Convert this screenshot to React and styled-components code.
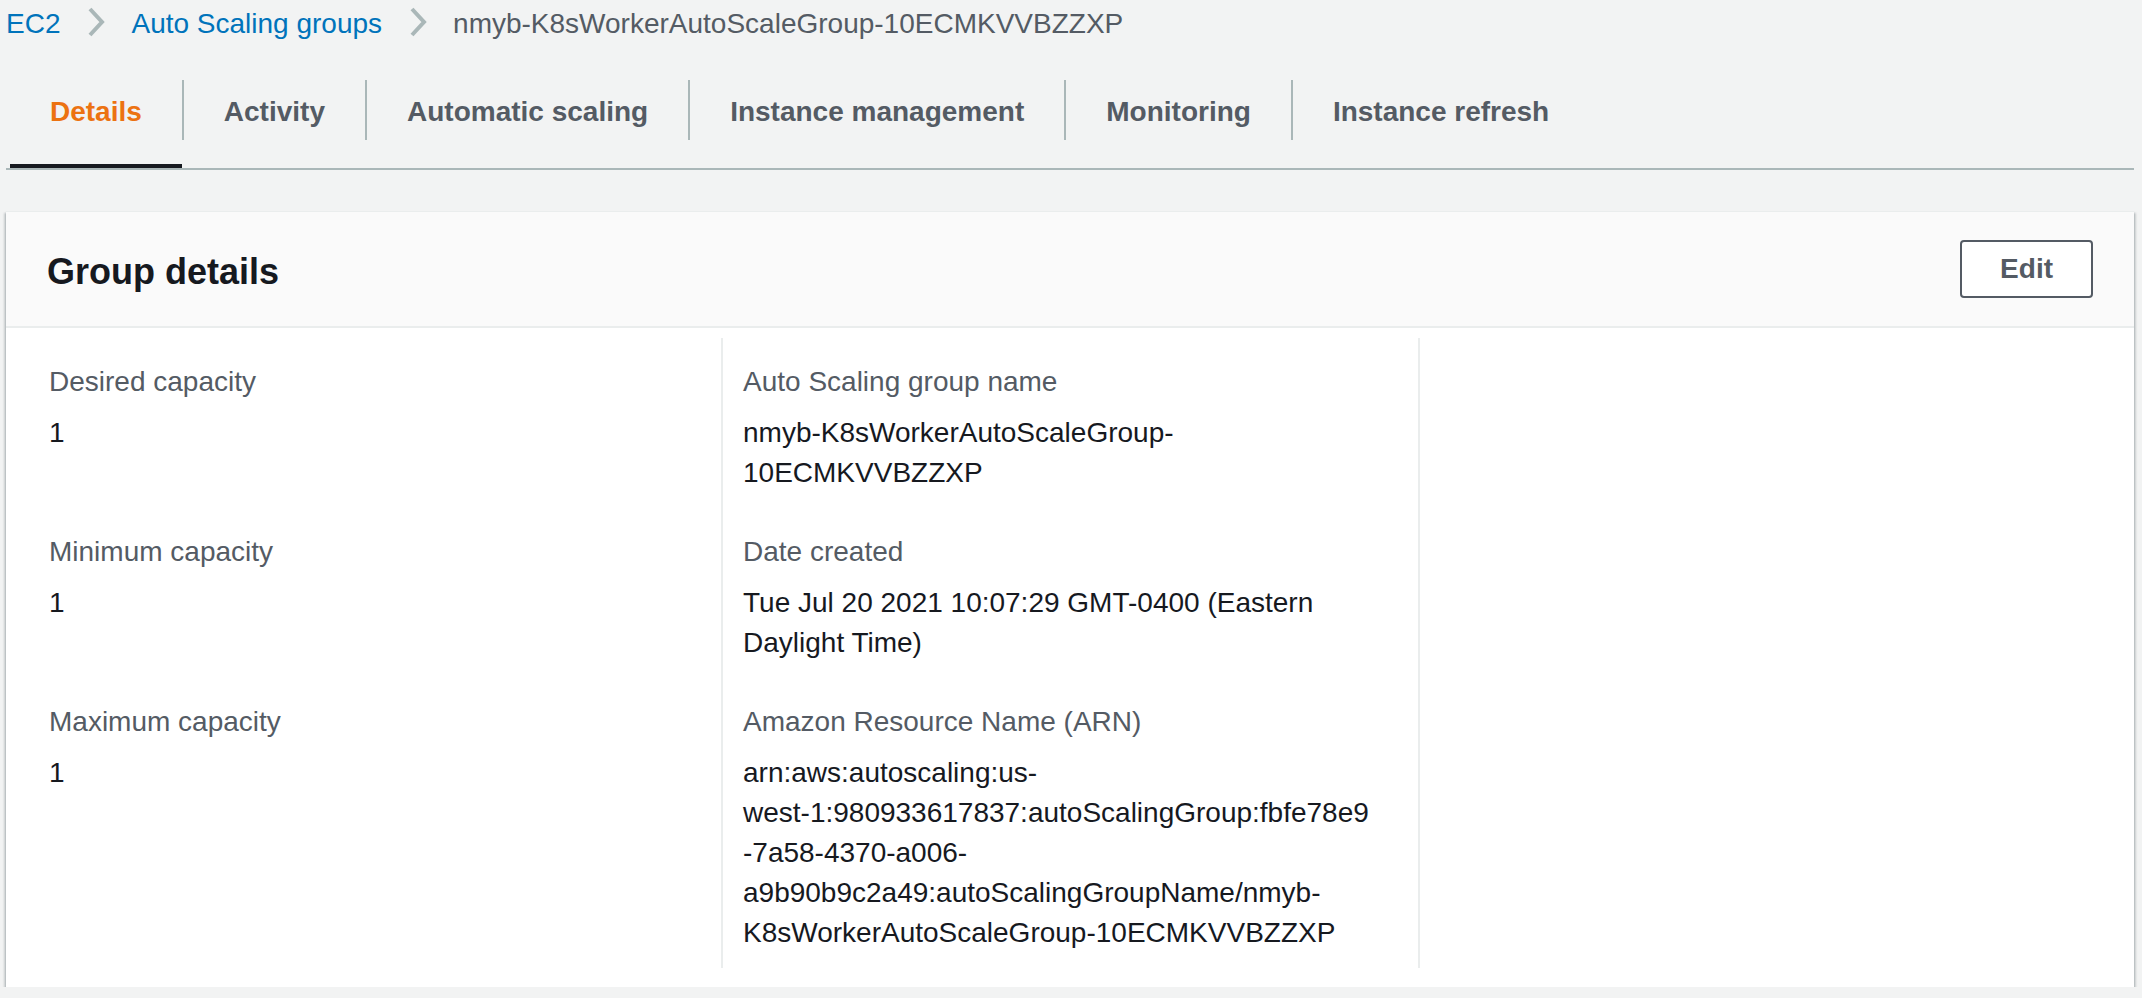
import React from "react";
import styled, { createGlobalStyle } from "styled-components";

const GlobalStyle = createGlobalStyle`
  body {
    margin: 0;
    background: #f2f3f3;
    font-family: "Liberation Sans", Arial, sans-serif;
    color: #16191f;
  }
`;

const crumbs = [
  { id: 0, label: "EC2", link: true },
  { id: 1, label: "Auto Scaling groups", link: true },
  { id: 2, label: "nmyb-K8sWorkerAutoScaleGroup-10ECMKVVBZZXP", link: false },
];

const tabs = [
  "Details",
  "Activity",
  "Automatic scaling",
  "Instance management",
  "Monitoring",
  "Instance refresh",
];

// each row: [left column item, middle column item]
const rows = [
  [
    { label: "Desired capacity", value: "1" },
    {
      label: "Auto Scaling group name",
      value: "nmyb-K8sWorkerAutoScaleGroup-\n10ECMKVVBZZXP",
    },
  ],
  [
    { label: "Minimum capacity", value: "1" },
    {
      label: "Date created",
      value: "Tue Jul 20 2021 10:07:29 GMT-0400 (Eastern\nDaylight Time)",
    },
  ],
  [
    { label: "Maximum capacity", value: "1" },
    {
      label: "Amazon Resource Name (ARN)",
      value:
        "arn:aws:autoscaling:us-\nwest-1:980933617837:autoScalingGroup:fbfe78e9\n-7a58-4370-a006-\na9b90b9c2a49:autoScalingGroupName/nmyb-\nK8sWorkerAutoScaleGroup-10ECMKVVBZZXP",
    },
  ],
];

const Page = styled.div`
  padding: 0 8px 0 6px;
`;

const Breadcrumbs = styled.nav`
  display: flex;
  align-items: center;
  height: 40px;
  padding-top: 4px;
  font-size: 28px;
  line-height: 40px;
`;

const Crumb = styled.span`
  color: ${(p) => (p.$link ? "#0073bb" : "#545b64")};
  white-space: nowrap;
`;

const ChevronIcon = styled.svg`
  width: 17px;
  height: 30px;
  margin: -4px 26px 0 28px;
  flex: none;
`;

const TabList = styled.div`
  display: flex;
  margin-top: 16px;
  border-bottom: 2px solid #aab7b8;
`;

const Tab = styled.div`
  padding: 20px 0 24px;
  border-bottom: 4px solid ${(p) => (p.$active ? "#16191f" : "transparent")};
  margin-left: ${(p) => (p.$first ? "4px" : "0")};
  cursor: pointer;
`;

const TabLabel = styled.span`
  display: block;
  padding: 3px 40px 0;
  line-height: 57px;
  font-size: 28px;
  font-weight: 700;
  white-space: nowrap;
  color: ${(p) => (p.$active ? "#ec7211" : "#545b64")};
  border-left: ${(p) => (p.$first ? "none" : "2px solid #aab7b8")};
`;

const Card = styled.section`
  margin-top: 41px;
  background: #ffffff;
  border-top: 1px solid #eaeded;
  box-shadow: 0 2px 2px 0 rgba(0, 28, 36, 0.3), 2px 2px 2px 0 rgba(0, 28, 36, 0.15),
    -2px 2px 2px 0 rgba(0, 28, 36, 0.15);
`;

const CardHeader = styled.header`
  display: flex;
  align-items: center;
  justify-content: space-between;
  height: 116px;
  box-sizing: border-box;
  padding: 0 41px;
  background: #fafafa;
  border-bottom: 2px solid #eaeded;
`;

const Title = styled.h2`
  margin: 0;
  padding-top: 6px;
  font-size: 36px;
  font-weight: 700;
  color: #16191f;
`;

const EditButton = styled.button`
  height: 58px;
  padding: 0 38px;
  background: #ffffff;
  border: 2px solid #545b64;
  border-radius: 4px;
  font-family: inherit;
  font-size: 28px;
  font-weight: 700;
  color: #545b64;
  cursor: pointer;
`;

const CardBody = styled.div`
  padding: 10px 0 19px;
`;

const Grid = styled.div`
  display: grid;
  grid-template-columns: 715px 697px 1fr;
`;

const Cell = styled.div`
  padding: 24px 20px 15px ${(p) => (p.$first ? "43px" : "20px")};
  border-left: ${(p) => (p.$first ? "none" : "2px solid #eaeded")};
  min-width: 0;
`;

const EmptyColumn = styled.div`
  grid-column: 3;
  grid-row: 1 / 4;
  border-left: 2px solid #eaeded;
`;

const Label = styled.div`
  font-size: 28px;
  line-height: 40px;
  color: #545b64;
`;

const Value = styled.div`
  margin-top: 11px;
  font-size: 28px;
  line-height: 40px;
  color: #16191f;
  white-space: pre-line;
  overflow-wrap: anywhere;
`;

const Chevron = () => (
  <ChevronIcon viewBox="0 0 17 30">
    <polyline
      points="2,2 14,15 2,28"
      fill="none"
      stroke="#aab7b8"
      strokeWidth="4"
    />
  </ChevronIcon>
);

const App = () => {
  return (
    <Page>
      <GlobalStyle />
      <Breadcrumbs>
        {crumbs.map((c, i) => (
          <React.Fragment key={c.id}>
            {i > 0 && <Chevron />}
            <Crumb $link={c.link}>{c.label}</Crumb>
          </React.Fragment>
        ))}
      </Breadcrumbs>
      <TabList>
        {tabs.map((t, i) => (
          <Tab key={t} $active={i === 0} $first={i === 0}>
            <TabLabel $active={i === 0} $first={i === 0}>
              {t}
            </TabLabel>
          </Tab>
        ))}
      </TabList>
      <Card>
        <CardHeader>
          <Title>Group details</Title>
          <EditButton>Edit</EditButton>
        </CardHeader>
        <CardBody>
          <Grid>
            {rows.map((r, i) =>
              r.map((item, j) => (
                <Cell
                  key={item.label}
                  $first={j === 0}
                  style={{ gridRow: i + 1, gridColumn: j + 1 }}
                >
                  <Label>{item.label}</Label>
                  <Value>{item.value}</Value>
                </Cell>
              ))
            )}
            <EmptyColumn />
          </Grid>
        </CardBody>
      </Card>
    </Page>
  );
};

export default App;
